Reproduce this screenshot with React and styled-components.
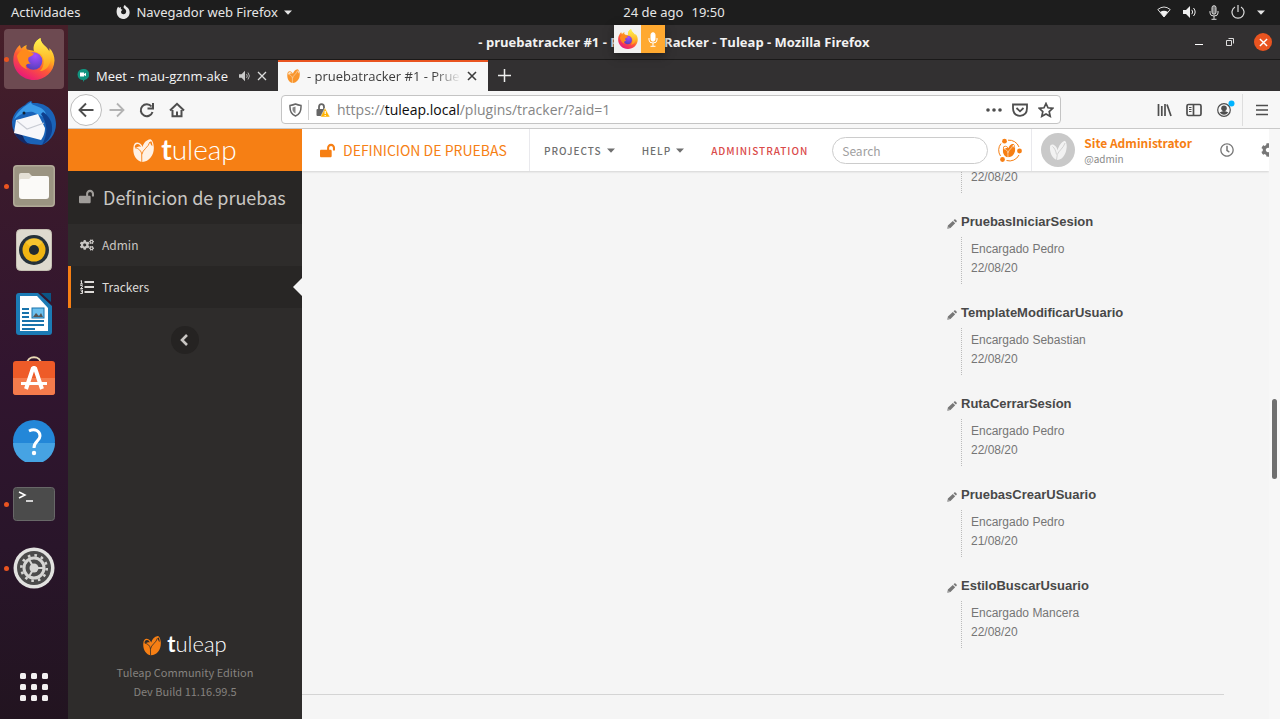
import React from "react";
import styled, { createGlobalStyle, css } from "styled-components";
import { FaLockOpen, FaCogs, FaRegClock, FaCog } from "react-icons/fa";

const ui = `"Open Sans", "Noto Sans", sans-serif`;
const shell = `"Noto Sans", "Open Sans", sans-serif`;
const site = `"Noto Sans CJK JP", "Noto Sans", sans-serif`;
const body = `"Liberation Sans", Arial, sans-serif`;
const orange = "#f67f14";

const Global = createGlobalStyle`
  * { box-sizing: border-box; }
  body { margin: 0; background: #f5f5f5; font-family: ${ui}; }
  button { border: 0; padding: 0; background: none; font: inherit; color: inherit; display: flex; align-items: center; justify-content: center; }
  a { color: inherit; text-decoration: none; }
  p, h1, h2, h3, ul { margin: 0; padding: 0; }
  ul { list-style: none; }
  svg { display: block; flex: none; }
`;

/* ---------- desktop shell ---------- */
const Desktop = styled.div`
  display: flex;
  flex-direction: column;
  height: 100vh;
  overflow: hidden;
`;
const TopBar = styled.header`
  display: flex;
  align-items: center;
  flex: none;
  height: 25px;
  padding-bottom: 1px;
  background: #1d1d1d;
  color: #e6e6e6;
  font-family: ${shell};
  font-size: 13px;
  white-space: nowrap;
`;
const TopLeft = styled.div`
  flex: 1 0 83px;
  display: flex;
  align-items: center;
  gap: 36px;
  padding-left: 11px;
`;
const AppMenu = styled.button`
  gap: 6px;
`;
const Clock = styled.div`
  display: flex;
  gap: 8px;
`;
const TopRight = styled.div`
  flex: 1 0 0;
  display: flex;
  align-items: center;
  justify-content: flex-end;
  gap: 12px;
  padding-right: 15px;
`;
const Below = styled.div`
  flex: 1;
  display: flex;
  min-height: 0;
`;
const Dock = styled.nav`
  flex: none;
  width: 68px;
  padding: 4px 4px 9px;
  display: flex;
  flex-direction: column;
  justify-content: space-between;
  background: linear-gradient(#471f29, #3a1a2c 22%, #31152f 50%, #29152a 75%, #221420);
`;
const DockApps = styled.div`
  display: flex;
  flex-direction: column;
  justify-content: space-between;
  height: 569px;
`;
const DockButton = styled.button`
  position: relative;
  width: 60px;
  height: 60px;
  border-radius: 4px;
  ${(p) => p.$active && css`background: #6d4a51;`}
  ${(p) =>
    p.$running &&
    css`
      &::before {
        content: "";
        position: absolute;
        left: 0;
        top: 28px;
        width: 5px;
        height: 5px;
        border-radius: 50%;
        background: #e95420;
      }
    `}
`;
const DockGrid = styled.button`
  width: 60px;
  height: 46px;
`;

/* ---------- browser window ---------- */
const Window = styled.section`
  flex: 1;
  min-width: 0;
  display: flex;
  flex-direction: column;
  background: #323031;
`;
const TitleBar = styled.div`
  position: relative;
  flex: none;
  height: 35px;
  display: flex;
  align-items: center;
  justify-content: center;
  border-bottom: 1px solid #1a1919;
  color: #f2f2f2;
  font-size: 13px;
  font-weight: 700;
`;
const WindowButtons = styled.div`
  position: absolute;
  right: 8px;
  top: 8px;
  display: flex;
  gap: 20px;
  align-items: center;
  button:first-child { margin-right: 3px; }
`;
const CloseButton = styled.button`
  width: 18px;
  height: 18px;
  border-radius: 50%;
  background: #e95420;
`;
const ShareBadge = styled.div`
  position: fixed;
  left: calc(50% - 26px);
  top: 25px;
  display: flex;
  height: 28px;
  box-shadow: 0 3px 8px #1118;
`;
const BadgeCell = styled.span`
  display: flex;
  align-items: center;
  justify-content: center;
  width: ${(p) => (p.$hot ? "24px" : "27px")};
  background: ${(p) => (p.$hot ? "#ffa930" : "#f1f1f1")};
`;
const Tabs = styled.div`
  flex: none;
  display: flex;
  height: 31px;
  color: #f5f5f5;
  font-size: 13px;
`;
const Tab = styled.div`
  display: flex;
  align-items: center;
  width: 210px;
  padding: 0 11px 0 9px;
  white-space: nowrap;
  ${(p) =>
    p.$active &&
    css`
      background: #f7f7f7;
      color: #3c3c3c;
      box-shadow: inset 0 2px #e95420;
    `}
`;
const TabTitle = styled.span`
  flex: 1;
  margin-left: 7px;
  overflow: hidden;
  ${(p) => p.$fade && css`mask-image: linear-gradient(90deg, #000 82%, transparent);`}
`;
const TabIcons = styled.span`
  display: flex;
  gap: 6px;
  margin-left: 6px;
  align-items: center;
`;
const NewTab = styled.button`
  width: 33px;
`;
const ToolBar = styled.div`
  flex: none;
  display: flex;
  align-items: center;
  height: 38px;
  padding: 0 12px 0 2px;
  background: #f7f7f7;
  border-bottom: 1px solid #c9c9c9;
`;
const BackButton = styled.button`
  width: 32px;
  height: 32px;
  border: 1px solid #bdbdbd;
  border-radius: 50%;
  background: #fff;
`;
const NavButtons = styled.div`
  display: flex;
  align-items: center;
  gap: 14px;
  margin-left: 7px;
`;
const AddressBar = styled.div`
  flex: 0 1 780px;
  margin-left: 96px;
  height: 29px;
  display: flex;
  align-items: center;
  padding: 0 6px 0 7px;
  border: 1px solid #c4c4c4;
  border-radius: 4px;
  background: #fff;
  color: #858585;
  font-size: 14px;
`;
const Rule = styled.span`
  width: 1px;
  height: 20px;
  margin: 0 7px 0 6px;
  background: #d0d0d0;
`;
const Url = styled.span`
  flex: 1;
  margin-left: 7px;
  b { font-weight: 400; color: #0c0c0c; }
`;
const AddressActions = styled.div`
  display: flex;
  gap: 10px;
  align-items: center;
`;
const BrowserTools = styled.div`
  margin-left: auto;
  display: flex;
  gap: 14px;
  align-items: center;
`;
const ToolDivider = styled.span`
  width: 1px;
  height: 32px;
  margin: 0 -1px 0 -7px;
  background: #dedede;
`;

/* ---------- web page ---------- */
const Page = styled.div`
  flex: 1;
  min-height: 0;
  display: flex;
  background: #f5f5f5;
`;
const Sidebar = styled.aside`
  flex: none;
  width: 234px;
  display: flex;
  flex-direction: column;
  background: #2e2c2b;
  color: #c9c6c3;
  font-family: ${site};
`;
const BrandBar = styled.a`
  display: flex;
  align-items: center;
  justify-content: center;
  height: 42px;
  background: ${orange};
`;
const Brand = styled.span`
  display: flex;
  align-items: center;
  gap: ${(p) => (p.$small ? "6px" : "7px")};
  color: #fff;
  font-family: Lato, "Open Sans", sans-serif;
  font-size: ${(p) => (p.$small ? "22px" : "28px")};
  line-height: ${(p) => (p.$small ? "28px" : "38px")};
  font-weight: 300;
  span { margin-top: -2px; }
  b { font-weight: 700; }
`;
const ProjectTitle = styled.h1`
  display: flex;
  align-items: center;
  gap: 9px;
  height: 53px;
  padding: 0 0 2px 11px;
  background: #282625;
  font-size: 18px;
  font-weight: 400;
  white-space: nowrap;
`;
const SideLink = styled.a`
  position: relative;
  display: flex;
  align-items: center;
  gap: 8px;
  height: 42px;
  padding: 0 0 1px 9px;
  border-left: 3px solid transparent;
  font-size: 12px;
  ${(p) =>
    p.$active &&
    css`
      border-left-color: ${orange};
      background: #282625;
      color: #dedbd8;
      &::after {
        content: "";
        position: absolute;
        right: 0;
        top: 12px;
        border: 9px solid transparent;
        border-left-width: 0;
        border-right-color: #f5f5f5;
      }
    `}
`;
const SideLinks = styled.nav`
  margin-bottom: 18px;
`;
const Collapse = styled.button`
  align-self: center;
  width: 28px;
  height: 28px;
  border-radius: 50%;
  background: #252322;
`;
const SideFooter = styled.footer`
  margin-top: auto;
  padding-bottom: 18px;
  display: flex;
  flex-direction: column;
  align-items: center;
  color: #85827f;
  font-size: 11px;
  line-height: 19px;
`;
const FooterBrand = styled.div`
  margin-bottom: 5px;
`;
const Main = styled.div`
  flex: 1;
  min-width: 0;
  display: flex;
  flex-direction: column;
  overflow: hidden;
`;
const SiteHeader = styled.header`
  position: relative;
  z-index: 1;
  flex: none;
  height: 42px;
  display: flex;
  align-items: center;
  background: #fff;
  color: #777;
  font-family: ${site};
  box-shadow: 0 1px 2px #0002;
  overflow: hidden;
  white-space: nowrap;
`;
const ProjectLink = styled.a`
  display: flex;
  align-items: center;
  gap: 8px;
  height: 42px;
  width: 228px;
  padding-left: 18px;
  border-right: 1px solid #e9e9ed;
  color: ${orange};
  font-size: 14px;
`;
const NavItem = styled.a`
  display: flex;
  align-items: center;
  gap: 5px;
  margin-left: ${(p) => p.$gap || "27px"};
  font-size: 10px;
  font-weight: 500;
  letter-spacing: 1px;
  color: ${(p) => (p.$admin ? "#da4a4a" : "#6f6f6f")};
`;
const Search = styled.input`
  width: 156px;
  height: 27px;
  margin: 0 9px 0 24px;
  padding: 0 9px;
  border: 1px solid #ccc;
  border-radius: 14px;
  background: #fff;
  font: 12px ${site};
  &::placeholder { color: #a0a0a0; opacity: 1; }
`;
const UserBlock = styled.a`
  display: flex;
  align-items: center;
  gap: 9px;
  height: 42px;
  margin-left: 9px;
  padding-left: 9px;
  border-left: 1px solid #e9e9ed;
`;
const Avatar = styled.span`
  display: flex;
  align-items: center;
  justify-content: center;
  width: 34px;
  height: 34px;
  border-radius: 50%;
  background: #c9c9c9;
`;
const UserText = styled.span`
  display: flex;
  flex-direction: column;
  font-size: 10px;
  line-height: 15px;
  color: #8a8a8a;
  strong { font-size: 12px; line-height: 16px; color: ${orange}; font-weight: 700; }
`;
const HeaderActions = styled.div`
  display: flex;
  gap: 27px;
  margin: 0 -6px 0 auto;
`;
const Content = styled.main`
  flex: 1;
  min-height: 0;
  overflow: hidden;
  margin-right: 45px;
  font-family: ${body};
`;
const Columns = styled.div`
  display: flex;
  justify-content: flex-end;
  padding-bottom: 46px;
  border-bottom: 1px solid #d4d4d4;
`;
const EntryList = styled.ul`
  width: 277px;
  margin-top: -6px;
  display: flex;
  flex-direction: column;
  gap: 19px;
`;
const EntryTitle = styled.h3`
  display: flex;
  align-items: center;
  gap: 4px;
  margin-bottom: 5px;
  color: #484848;
  font-size: 13px;
  line-height: 20px;
  svg { margin-top: 3px; }
`;
const EntryMeta = styled.div`
  margin-left: 14px;
  padding: 3px 0 6px 9px;
  border-left: 1px dotted #bbb;
  color: #757575;
  font-size: 12px;
  line-height: 19px;
`;
const ScrollTrack = styled.div`
  flex: none;
  width: 11px;
  display: flex;
  flex-direction: column;
  align-items: center;
  background: #f7f7f7;
`;
const Gap = styled.span`
  flex: ${(p) => p.$grow};
`;
const Thumb = styled.span`
  flex: 80;
  width: 5px;
  border-radius: 3px;
  background: #6e6e6e;
`;

/* ---------- drawings ---------- */
const Tulip = ({ w, h, fill, cut }) => (
  <svg width={w} height={h} viewBox="0 0 21 23" fill="none">
    <path fill={fill} d="M.4 8.500C.6 5.500 2 3.500 4.500 3.600C7 3.900 8.800 5.800 9.600 8C10.500 4 13.200 .9 17.300 .3C19 .5 20.600 4 20.800 8C21.300 15.500 16.500 22.800 9.300 22.900C3 22 -.4 15.500 .4 8.500Z" />
    <path fill={cut} d="M1.700 8.300C1.800 6.300 3 4.900 4.700 5C6.300 5.200 7.500 6.500 8.200 8C6.500 7.300 5 7.500 3.800 8.500ZM17 3.200C17.600 1.700 18.200 1.900 18.700 3C19.200 4.500 19.500 6 19.400 7.300C18.400 6.500 17.500 5 17 3.200Z" />
    <path stroke={cut} strokeWidth=".9" d="M2 8.800C5.500 9.200 8.600 12 8.700 15.500L8.800 23M8.800 15.500C9.500 10.500 15.800 8 16.800 3" />
  </svg>
);

const FirefoxArt = ({ size, id }) => (
  <svg width={size} height={size} viewBox="0 0 42 42">
    <defs>
      <linearGradient id={`${id}body`} x1=".85" y1=".05" x2=".3" y2="1">
        <stop offset="0" stopColor="#fff44f" />
        <stop offset=".35" stopColor="#ffb21f" />
        <stop offset=".6" stopColor="#ff5a36" />
        <stop offset="1" stopColor="#e8157c" />
      </linearGradient>
      <linearGradient id={`${id}tail`} x1=".5" y1="0" x2=".5" y2="1">
        <stop offset="0" stopColor="#fff44f" />
        <stop offset="1" stopColor="#ff9a1a" />
      </linearGradient>
      <radialGradient id={`${id}globe`} cx=".6" cy=".2" r=".9">
        <stop offset="0" stopColor="#a74dff" />
        <stop offset="1" stopColor="#4b3fb5" />
      </radialGradient>
    </defs>
    <path fill={`url(#${id}body)`} d="M4 10C5 8.500 6 7.500 7 7C7.200 8.500 7.600 9.500 8.500 10.500C11 7.500 14 7 14 7C13 8.500 13 10.500 14 11.500L22 13C20 8 22 3 27.500 0C27.500 4 30 6 33 9C34.500 10.500 35.500 12 36 13.500C36.600 12.500 36.500 11 36.300 10C40 13.500 41.500 18 41.500 22.500C41 34 32 42 21 42C9.500 42 .3 33 .3 22C.3 17 1.800 13 4 10Z" />
    <path fill={`url(#${id}tail)`} d="M21 13C19.500 8 22 3 27.500 0C27.500 4 30 6 33 9C38 14 39 21 36 27C34 31 30 33 27 33C32 28 32 19 27 15.500Z" />
    <circle cx="20.500" cy="23" r="8.800" fill={`url(#${id}globe)`} />
    <path fill="#ff8a1c" d="M4 18C6 13 10 11 14 11.500C15 14 18 15 21 15.500C20 18 17 18.500 15.500 19.500C15 21.500 15 24 18 25.500C13 25 10.500 29 15 31.500C8 30 5 24 4 18Z" />
  </svg>
);

const Thunderbird = () => (
  <svg width="46" height="46" viewBox="0 0 46 46">
    <path fill="#1a63b8" d="M1 22C2 13 8 8 14 5C16 3 18 1 21 1C20 2 21 3 22 3C35 2 45 11 45 24C45 34 38 43 30 45L20 44C8 42 1 34 1 22Z" />
    <path fill="#3b9be8" d="M3 20C6 11 14 6 20 2C20 5 24 5 30 8C35 11 36 15 34 18L22 12C15 11 9 14 3 20Z" />
    <path fill="#0e3f8e" d="M32 12C38 16 42 22 41 31C40 37 36 42 31 45C37 34 37 24 30 14Z" />
    <path fill="#142a66" d="M2 29C5 38 10 43 19 45C15 42 13 40 12 36Z" />
    <path fill="#f7f7fa" d="M5 20L9 19L27 14L34 28C34 34 31 39 30 40L3 33Z" />
    <path fill="none" stroke="#c9ccd4" strokeWidth="1.200" d="M6 21L16 29L33 23" />
    <circle cx="13" cy="13" r="1.500" fill="#123" />
  </svg>
);
const Files = () => (
  <svg width="42" height="42" viewBox="0 0 42 42">
    <rect width="42" height="42" rx="4" fill="#b1aa98" />
    <rect x="1.500" y="1.500" width="39" height="39" rx="3" fill="#9b9482" />
    <path fill="#e4e0d6" d="M6 10Q6 8 8 8H16L19 11H26V18H6Z" />
    <path fill="#fbfaf8" d="M6 16Q6 14 8 14H16L19 11H34Q36 11 36 13V31Q36 34 33 34H9Q6 34 6 31Z" />
  </svg>
);
const Speaker = () => (
  <svg width="36" height="42" viewBox="0 0 36 42">
    <rect x=".5" y=".5" width="35" height="41" rx="4" fill="#dedacf" stroke="#c4bfb2" />
    <circle cx="18" cy="21" r="15" fill="#25313a" />
    <circle cx="18" cy="21" r="11.500" fill="#f0b512" />
    <path fill="#ffd54a" d="M18 21L9 13A12 12 0 0 1 27 13Z" opacity=".5" />
    <circle cx="18" cy="21" r="5" fill="#222b30" />
  </svg>
);
const Writer = () => (
  <svg width="36" height="42" viewBox="0 0 36 42">
    <path fill="#1b7bb5" d="M3 0H22L36 13V39Q36 42 33 42H3Q0 42 0 39V3Q0 0 3 0Z" />
    <path fill="#0b5585" d="M25 0H35V9Z" />
    <path fill="#fff" d="M4 3H21L32 15V38H4Z" />
    <path stroke="#1973ab" strokeWidth="2" d="M6 16H13M6 20H13M6 24H13M6 28H28M6 32H28M6 36H19" />
    <rect x="16" y="15" width="12" height="10" fill="#6cc0ee" stroke="#1973ab" />
    <path fill="#555" d="M17 24L20 20L23 23L25 20L27 24Z" />
  </svg>
);
const Store = () => (
  <svg width="42" height="42" viewBox="0 0 42 42">
    <path fill="none" stroke="#e9d9b4" strokeWidth="2" d="M14 8C14-1 28-1 28 8" />
    <rect y="5" width="42" height="34" rx="3" fill="#ee5b28" />
    <path fill="#f47b4c" d="M0 22H42V36Q42 39 39 39H3Q0 39 0 36Z" />
    <path fill="none" stroke="#fff" strokeWidth="4" strokeLinejoin="bevel" d="M13 33L20 12H22L29 33" />
    <path stroke="#fff" strokeWidth="3" d="M8 27.500H34" />
  </svg>
);
const Help = () => (
  <svg width="42" height="42" viewBox="0 0 42 42">
    <circle cx="21" cy="21" r="21" fill="#2387d8" />
    <path fill="#46a3e3" d="M0 23H42A21 21 0 0 1 0 23Z" />
    <path fill="none" stroke="#fff" strokeWidth="3" d="M16 11C22 8 27 11 27 16C27 21 21 21 21 28" />
    <circle cx="21" cy="33" r="2.200" fill="#fff" />
  </svg>
);
const Terminal = () => (
  <svg width="42" height="34" viewBox="0 0 42 34">
    <rect x=".5" y=".5" width="41" height="33" rx="3" fill="#4b4b4b" stroke="#686868" />
    <path fill="none" stroke="#fff" strokeWidth="1.500" d="M6 5L12 8L6 11M13 14H20" />
  </svg>
);
const Settings = () => (
  <svg width="42" height="42" viewBox="0 0 42 42">
    <circle cx="21" cy="21" r="20.500" fill="#e2e2e0" />
    <circle cx="21" cy="21" r="17" fill="#4b4b4b" />
    <circle cx="21" cy="21" r="12.700" fill="none" stroke="#d5d5d3" strokeWidth="2.600" strokeDasharray="2.600 4.050" />
    <circle cx="21" cy="21" r="10" fill="none" stroke="#d5d5d3" strokeWidth="3" />
    <circle cx="21" cy="21" r="4.500" fill="#d5d5d3" />
    <path stroke="#d5d5d3" strokeWidth="2" d="M21 21H31M21 21L16 12.500M21 21L16 29.500" />
  </svg>
);
const GridArt = () => (
  <svg width="30" height="30" viewBox="0 0 30 30" fill="#f2f0f1">
    {[1, 12, 23].map((y) => [1, 12, 23].map((x) => <rect key={`${x}-${y}`} x={x} y={y} width="6" height="6" rx="1.500" />))}
  </svg>
);
const Caret = ({ w = 8, h = 5 }) => (
  <svg width={w} height={h} viewBox="0 0 8 5"><path fill="currentColor" d="M0 .5H8L4 4.800Z" /></svg>
);
const FirefoxMono = () => (
  <svg width="14" height="14" viewBox="0 0 14 14">
    <path fill="#e8e8e8" fillRule="evenodd" d="M1.500 2.500L2.600 1.800L3 3C4 2.300 5 2.300 5 2.300L4.800 4L6.500 4.800L5.300 6C4.500 8 6 9.300 7.500 9.300C9.500 9.300 10.600 7.500 10 5.500C9.500 4 8 3.500 7.600 2.500C7.400 1.300 8.300 .4 9 0C9.200 1.500 12 2.300 13 4.500C15 9 12 14 7 14C2.500 14-1.200 8.500 1.500 2.500Z" />
  </svg>
);
const Wifi = () => (
  <svg width="14" height="12" viewBox="0 0 14 12">
    <path fill="none" stroke="#ddd" d="M.8 3.500Q7-1.500 13.200 3.500L7 11Z" />
    <path fill="#f2f2f2" d="M3 6Q7 3.500 11 6L7 11Z" />
  </svg>
);
const Sound = ({ c = "#f0f0f0", s = 14 }) => (
  <svg width={s} height={s} viewBox="0 0 14 14">
    <path fill={c} d="M0 5H3L7 1V13L3 9H0Z" />
    <path fill="none" stroke={c} d="M8.800 4.800Q10.500 7 8.800 9.200M10.500 3Q13.800 7 10.500 11" />
  </svg>
);
const Mic = ({ c = "#ddd", solid }) => (
  <svg width="10" height="15" viewBox="0 0 10 15">
    <rect x="3" y=".7" width="4" height="8.500" rx="2" fill={solid ? c : "#777"} stroke={c} />
    <path fill="none" stroke={c} d="M1 6V8Q1 11 5 11Q9 11 9 8V6M5 11V14M2.500 14.300H7.500" />
  </svg>
);
const Power = () => (
  <svg width="14" height="14" viewBox="0 0 14 14" fill="none" stroke="#ddd" strokeWidth="1.200">
    <path d="M4 2A6 6 0 1 0 10 2M7 0V7" />
  </svg>
);
const Cross = ({ s = 10, c = "currentColor", w = 1.6 }) => (
  <svg width={s} height={s} viewBox="0 0 10 10" stroke={c} strokeWidth={w}><path d="M1 1L9 9M9 1L1 9" /></svg>
);
const Stroke = ({ w = 16, h = 16, c = "#4e4e4e", sw = 1.8, d, children }) => (
  <svg width={w} height={h} viewBox={`0 0 ${w} ${h}`} fill="none" stroke={c} strokeWidth={sw}>
    <path d={d} />
    {children}
  </svg>
);
const MeetIcon = () => (
  <svg width="12" height="13" viewBox="0 0 12 13">
    <path fill="#11937f" d="M6 0A5.500 5.500 0 0 1 7.500 11L6 13V11A5.500 5.500 0 0 1 6 0Z" />
    <path fill="#fff" d="M3 3.500H7V5L9 3.800V7.200L7 6V7.500H3Z" />
  </svg>
);
const InsecureLock = () => (
  <svg width="14" height="14" viewBox="0 0 14 14">
    <path fill="none" stroke="#666" strokeWidth="1.800" d="M3 7V4Q3 1.200 5.500 1.200Q8 1.200 8 4V6" />
    <rect x=".5" y="6" width="9" height="7" rx="1" fill="#666" />
    <path fill="#ffb300" stroke="#fff" strokeWidth=".5" d="M9 5L14 14H4.500Z" />
    <path stroke="#fff" strokeWidth="1.200" d="M9.200 8V11M9.200 12V13" />
  </svg>
);
const Account = () => (
  <svg width="19" height="19" viewBox="0 0 19 19">
    <circle cx="8" cy="10" r="6.300" fill="none" stroke="#4e4e4e" strokeWidth="1.200" />
    <circle cx="8" cy="8.300" r="2.800" fill="#4e4e4e" />
    <path fill="#4e4e4e" d="M3.700 12.500Q8 9.500 12.300 12.500Q8 17 3.700 12.500Z" />
    <circle cx="15.500" cy="3.500" r="3" fill="#00b3ff" />
  </svg>
);
const Orbit = () => (
  <svg width="25" height="25" viewBox="0 0 25 25">
    <g fill="none" stroke={orange}>
      <path d="M3.500 18A10.500 10.500 0 0 1 4 5.500M11 2.200A10.500 10.500 0 0 1 22 9M22 17A10.500 10.500 0 0 1 9.500 22.500" />
    </g>
    <g fill={orange}>
      <circle cx="7.500" cy="3.200" r="2.400" />
      <circle cx="22.500" cy="13" r="2.400" />
      <circle cx="5.500" cy="21.500" r="2.400" />
    </g>
    <svg x="5.500" y="5.500" width="13" height="14"><Tulip w={13} h={14} fill={orange} cut="#fff" /></svg>
  </svg>
);
const AvatarTulip = () => (
  <svg width="19" height="21" viewBox="0 0 19 21">
    <path fill="#f2f2f2" d="M1 6.500C1.200 5 3 4 5 5C7.500 6.500 8.300 8.500 8.300 10.500C10 6 12.300 1.500 16 .8C17.600 2.500 18.300 6 17.300 10C16 16 12.500 20 8 20C3 18.500 .5 12 1 6.500Z" />
    <path stroke="#c9c9c9" fill="none" strokeWidth=".8" d="M3.500 6.500C5.500 8 7 11 7.500 14.500M16 3C14.500 8 10 10.500 8.300 14.500L7.500 20" />
  </svg>
);
const Chevron = () => (
  <svg width="10" height="12" viewBox="0 0 10 12" fill="none" stroke="currentColor" strokeWidth="2.600">
    <path d="M7 1L2 6L7 11" />
  </svg>
);
const Pencil = () => (
  <svg width="10" height="10" viewBox="0 0 10 10" fill="#777">
    <path d="M.3 9.700L.9 6.500L5.800 1.900L8.200 4.200L3.500 9.100ZM6.500 1.300L7.300 .5Q7.900 0 8.500 .6L9.500 1.600Q10.100 2.200 9.500 2.900L8.800 3.600Z" />
    <path d="M1.200 7.800L2.200 8.800" stroke="#f5f5f5" strokeWidth=".7" />
  </svg>
);
const NumberedList = () => (
  <svg width="14" height="14" viewBox="0 0 14 14" fill="none" stroke="currentColor">
    <path strokeWidth="2" d="M4.500 2H14M4.500 7H14M4.500 12H14" />
    <path d="M.5 1L1.500 .5V4M0 4H3M.3 5.500H2.300V6.800L.5 8.500H3M.3 10H2.500V13.500H.3M1 11.700H2.500" />
  </svg>
);

const TuleapBrand = ({ small }) => (
  <Brand $small={small}>
    {small ? <Tulip w={18} h={21} fill={orange} cut="#2e2c2b" /> : <Tulip w={21} h={23} fill="#fff1e4" cut={orange} />}
    <span><b>t</b>uleap</span>
  </Brand>
);

const apps = [
  { name: "Firefox", art: <FirefoxArt size={42} id="dock" />, active: true, running: true },
  { name: "Thunderbird", art: <Thunderbird /> },
  { name: "Archivos", art: <Files />, running: true },
  { name: "Rhythmbox", art: <Speaker /> },
  { name: "Writer", art: <Writer /> },
  { name: "Software", art: <Store /> },
  { name: "Ayuda", art: <Help /> },
  { name: "Terminal", art: <Terminal />, running: true },
  { name: "Configuración", art: <Settings />, running: true },
];

const entries = [
  { lines: ["22/08/20"] },
  { title: "PruebasIniciarSesion", lines: ["Encargado Pedro", "22/08/20"] },
  { title: "TemplateModificarUsuario", lines: ["Encargado Sebastian", "22/08/20"] },
  { title: "RutaCerrarSesíon", lines: ["Encargado Pedro", "22/08/20"] },
  { title: "PruebasCrearUSuario", lines: ["Encargado Pedro", "21/08/20"] },
  { title: "EstiloBuscarUsuario", lines: ["Encargado Mancera", "22/08/20"] },
];

export default function App() {
  return (
    <Desktop>
      <Global />
      <TopBar>
        <TopLeft>
          <button>Actividades</button>
          <AppMenu><FirefoxMono />Navegador web Firefox<Caret /></AppMenu>
        </TopLeft>
        <Clock><span>24 de ago</span><span>19:50</span></Clock>
        <TopRight><Wifi /><Sound /><Mic /><Power /><Caret /></TopRight>
      </TopBar>
      <Below>
        <Dock>
          <DockApps>
            {apps.map((a) => (
              <DockButton key={a.name} aria-label={a.name} $active={a.active} $running={a.running}>{a.art}</DockButton>
            ))}
          </DockApps>
          <DockGrid aria-label="Aplicaciones"><GridArt /></DockGrid>
        </Dock>
        <Window>
          <TitleBar>
            - pruebatracker #1 - PruebaTRacker - Tuleap - Mozilla Firefox
            <WindowButtons>
              <button aria-label="Minimizar"><Stroke w={8} h={8} c="#fff" sw={1} d="M0 6.500H8" /></button>
              <button aria-label="Restaurar"><Stroke w={8} h={8} c="#ddd" sw={1} d="M.5 2.500H5.500V7.500H.5ZM2.500 .5H7.500V5.500" /></button>
              <CloseButton aria-label="Cerrar"><Cross s={9} c="#fff" /></CloseButton>
            </WindowButtons>
          </TitleBar>
          <ShareBadge>
            <BadgeCell><FirefoxArt size={20} id="badge" /></BadgeCell>
            <BadgeCell $hot><Mic c="#fff" solid /></BadgeCell>
          </ShareBadge>
          <Tabs>
            <Tab>
              <MeetIcon />
              <TabTitle>Meet - mau-gznm-ake</TabTitle>
              <TabIcons><Sound c="#c9c9c9" s={12} /><Cross c="#ddd" w={1.3} /></TabIcons>
            </Tab>
            <Tab $active>
              <Tulip w={13} h={14} fill="#f9952c" cut="#fbe3c4" />
              <TabTitle $fade>- pruebatracker #1 - Prue</TabTitle>
              <TabIcons><Cross /></TabIcons>
            </Tab>
            <NewTab aria-label="Nueva pestaña"><Stroke w={13} h={13} c="#eee" sw={1.5} d="M6.500 0V13M0 6.500H13" /></NewTab>
          </Tabs>
          <ToolBar>
            <BackButton aria-label="Atrás"><Stroke sw={1.9} d="M15.500 8H2M8 1.500L1.500 8L8 14.500" /></BackButton>
            <NavButtons>
              <button aria-label="Adelante"><Stroke c="#b3b3b3" d="M.5 8H14M8 1.500L14.500 8L8 14.500" /></button>
              <button aria-label="Recargar"><Stroke sw={2} d="M12.500 4.500A6 6 0 1 0 13.500 10M14 1V6.500H8.500" /></button>
              <button aria-label="Inicio"><Stroke d="M1 8.500L8 1.800L15 8.500M3.500 8V14.200H12.500V8M8 9.500V14" sw={2} /></button>
            </NavButtons>
            <AddressBar>
              <Stroke w={13} h={14} sw={1.5} c="#666" d="M1 2.500Q4 2 6.500 1Q9 2 12 2.500Q12.500 11 6.500 13Q.5 11 1 2.500Z">
                <path d="M6.500 3.500V10.500Q3 9 3.500 4.500" fill="#888" stroke="none" />
              </Stroke>
              <Rule />
              <InsecureLock />
              <Url>https://<b>tuleap.local</b>/plugins/tracker/?aid=1</Url>
              <AddressActions>
                <Stroke h={4} sw={0} d=""><g fill="#4e4e4e"><circle cx="2" cy="2" r="1.800" /><circle cx="8" cy="2" r="1.800" /><circle cx="14" cy="2" r="1.800" /></g></Stroke>
                <Stroke h={14} w={16} d="M1 1.500H15V5Q15 12.500 8 12.800Q1 12.500 1 5ZM4.500 5L8 8.300L11.500 5" />
                <Stroke sw={1.7} d="M8 1.500L10 5.800L14.800 6.300L11.200 9.600L12.200 14.300L8 11.900L3.800 14.300L4.800 9.600L1.200 6.300L6 5.800Z" />
              </AddressActions>
            </AddressBar>
            <BrowserTools>
              <button aria-label="Biblioteca"><Stroke h={14} w={15} sw={1.7} d="M1.500 1V13M4.800 3V13M8 1V13M10 1.500L14 13" /></button>
              <button aria-label="Barra lateral"><Stroke h={14} sw={1.7} d="M2.500 1.500H13.500Q15 1.500 15 3V11Q15 12.500 13.500 12.500H2.500Q1 12.500 1 11V3Q1 1.500 2.500 1.500ZM7.500 1V13"><path d="M3 4.500H5.500M3 6.500H5.500M3 8.500H5.500" strokeWidth="1" /></Stroke></button>
              <button aria-label="Cuenta"><Account /></button>
              <ToolDivider />
              <button aria-label="Menú"><Stroke w={12} h={12} sw={1.6} d="M0 1.500H12M0 6H12M0 10.500H12" /></button>
            </BrowserTools>
          </ToolBar>
          <Page>
            <Sidebar>
              <BrandBar href="#" aria-label="Tuleap"><TuleapBrand /></BrandBar>
              <ProjectTitle><FaLockOpen size={15} color="#a09d9a" />Definicion de pruebas</ProjectTitle>
              <SideLinks>
                <SideLink href="#"><FaCogs size={14} />Admin</SideLink>
                <SideLink href="#" $active><NumberedList />Trackers</SideLink>
              </SideLinks>
              <Collapse aria-label="Contraer"><Chevron /></Collapse>
              <SideFooter>
                <FooterBrand><TuleapBrand small /></FooterBrand>
                <p>Tuleap Community Edition</p>
                <p>Dev Build 11.16.99.5</p>
              </SideFooter>
            </Sidebar>
            <Main>
              <SiteHeader>
                <ProjectLink href="#"><FaLockOpen size={15} />DEFINICION DE PRUEBAS</ProjectLink>
                <NavItem href="#" $gap="14px">PROJECTS<Caret /></NavItem>
                <NavItem href="#">HELP<Caret /></NavItem>
                <NavItem href="#" $admin>ADMINISTRATION</NavItem>
                <Search type="search" placeholder="Search" aria-label="Search" />
                <Orbit />
                <UserBlock href="#">
                  <Avatar><AvatarTulip /></Avatar>
                  <UserText><strong>Site Administrator</strong><span>@admin</span></UserText>
                </UserBlock>
                <HeaderActions>
                  <button aria-label="History"><FaRegClock size={14} /></button>
                  <button aria-label="Preferences"><FaCog size={14} /></button>
                </HeaderActions>
              </SiteHeader>
              <Content>
                <Columns>
                  <EntryList>
                    {entries.map((e, i) => (
                      <li key={i}>
                        {e.title && <EntryTitle><Pencil />{e.title}</EntryTitle>}
                        <EntryMeta>{e.lines.map((l) => <p key={l}>{l}</p>)}</EntryMeta>
                      </li>
                    ))}
                  </EntryList>
                </Columns>
              </Content>
            </Main>
            <ScrollTrack><Gap $grow={270} /><Thumb /><Gap $grow={240} /></ScrollTrack>
          </Page>
        </Window>
      </Below>
    </Desktop>
  );
}
